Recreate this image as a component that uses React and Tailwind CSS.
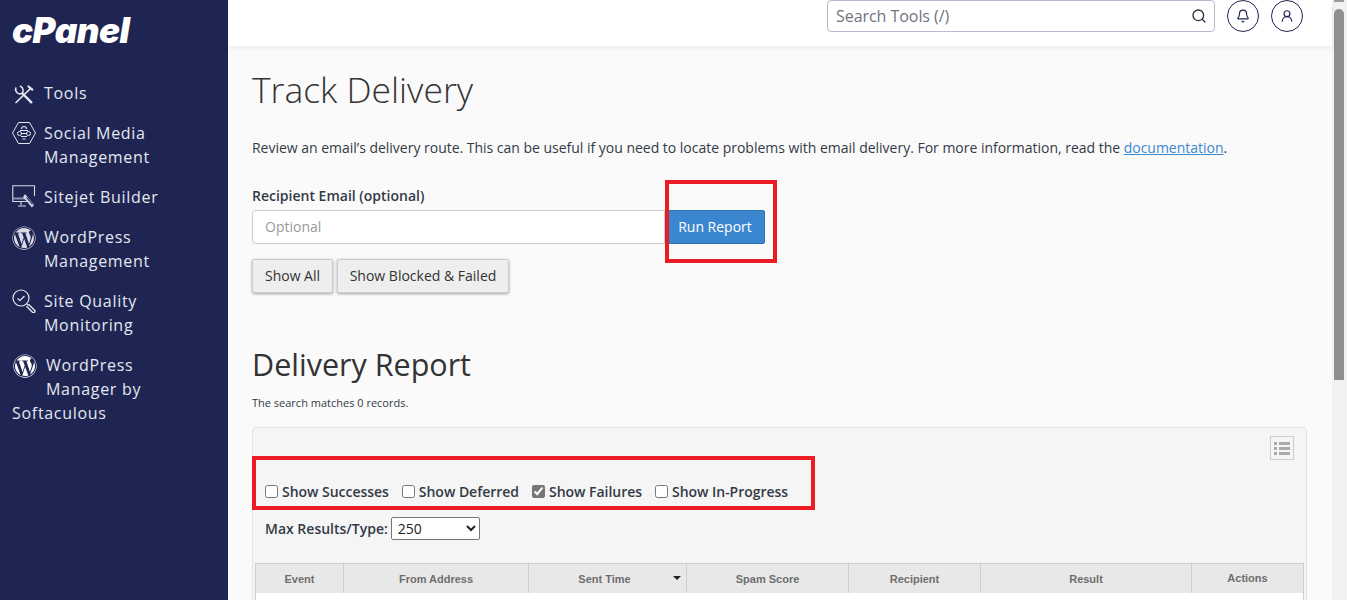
import { Search, Bell, UserRound } from 'lucide-react';
import { FaWordpress } from 'react-icons/fa';

const font = { fontFamily: '"Open Sans", sans-serif' };

const ToolsIcon = () => (
    <svg className="w-6 h-6 shrink-0" viewBox="0 0 24 24" fill="none" stroke="#e4e7f0" strokeWidth="1.700" strokeLinecap="round">
        <path d="M18.500 7.500L4 21.500" />
        <path d="M16.500 5.500l3.800 3.200" strokeWidth="2.200" />
        <path d="M10.500 12.500l8.800 8.800" strokeWidth="2.400" />
        <path d="M3.800 7a4.400 4.400 0 0 0 6.200 5.300 4.400 4.400 0 0 0-1.600-7" strokeWidth="1.500" />
    </svg>
);

const SocialIcon = () => (
    <svg className="w-6 h-6 shrink-0" viewBox="0 0 24 24" fill="none" stroke="#e4e7f0" strokeWidth="1">
        <path d="M6.500 1.500h11L23.500 12l-6 10.500h-11L.5 12z" />
        <circle cx="7.500" cy="12.500" r="2" />
        <circle cx="16.500" cy="12.500" r="2" />
        <path d="M9.500 12.500h5M8 9.500h8M9.500 8a2.500 2.500 0 0 1 5 0M9 15.500h6M10.500 18h3" strokeWidth="1.200" />
    </svg>
);

const SitejetIcon = () => (
    <svg className="w-6 h-6 shrink-0" viewBox="0 0 24 24" fill="none" stroke="#d8dbe6" strokeWidth="1.100">
        <path d="M22.500 11V.8H.8v15.700h14" />
        <path d="M1 13.500h12" stroke="#8f94ad" strokeWidth="2" />
        <path d="M9 17v3M6 21h8" />
        <path d="M13 9l9 11-2 2.500L11 12z" fill="#d8dbe6" stroke="none" />
        <path d="M14.500 12.500l6 7" stroke="#1f2552" />
    </svg>
);

const QualityIcon = () => (
    <svg className="w-6 h-6 shrink-0" viewBox="0 0 24 24" fill="none" stroke="#e4e7f0" strokeWidth="1.200">
        <circle cx="9" cy="9" r="8" />
        <path d="M5.500 9.500l2.500 2 4.500-4.500" />
        <path d="M15 15l1.500 1.500" />
        <path d="M16.500 15.200l6 6a1.300 1.300 0 0 1-2 2l-6-6" strokeWidth="1.400" />
    </svg>
);

const NavItem = ({ icon, lines }) => (
    <div className="flex gap-2 mb-4 px-3 text-base leading-6 tracking-[0.7px] text-[#e4e7f0]">
        {icon}
        <span className="whitespace-pre-line">{lines}</span>
    </div>
);

const Sidebar = () => (
    <aside className="w-[228px] shrink-0 bg-[#1f2552] h-full">
        <div className="h-[81px] pl-3 pt-2">
            <span
                className="block text-[35px] leading-[44px] font-black italic tracking-[-0.5px] text-white"
                style={{ fontFamily: 'Inter, sans-serif' }}
            >
                cPanel
            </span>
        </div>
        <NavItem icon={<ToolsIcon />} lines="Tools" />
        <NavItem icon={<SocialIcon />} lines={'Social Media\nManagement'} />
        <NavItem icon={<SitejetIcon />} lines="Sitejet Builder" />
        <NavItem icon={<FaWordpress className="w-6 h-6 shrink-0 mt-px text-[#d8dbe6]" />} lines={'WordPress\nManagement'} />
        <NavItem icon={<QualityIcon />} lines={'Site Quality\nMonitoring'} />
        <div className="px-3 text-base leading-6 tracking-[0.7px] text-[#e4e7f0]">
            <div className="float-left h-12 ml-px mr-[9px] pt-px">
                <FaWordpress className="w-6 h-6 text-white" />
            </div>
            WordPress<br />
            Manager by<br />
            Softaculous
        </div>
    </aside>
);

const Header = () => (
    <header className="h-[46px] bg-white shadow-[0_2px_5px_rgba(0,0,0,0.06)] flex items-start justify-end gap-3 pr-[29px]">
        <div className="w-[388px] h-8 border border-[#b9bbcf] rounded flex items-center justify-between pl-2 pr-[7px] bg-white">
            <span className="text-base text-[#6f7480] tracking-[-0.05px]">Search Tools (/)</span>
            <Search className="w-4 h-4 text-[#2b2f38]" />
        </div>
        <button className="w-8 h-8 rounded-full border border-[#1f2552] flex items-center justify-center">
            <Bell className="w-[14px] h-[14px] text-[#1f2552]" />
        </button>
        <button className="w-8 h-8 rounded-full border border-[#1f2552] flex items-center justify-center">
            <UserRound className="w-[14px] h-[14px] text-[#1f2552]" />
        </button>
    </header>
);

const columns = [
    { name: 'Event' },
    { name: 'From Address' },
    { name: 'Sent Time', sorted: true },
    { name: 'Spam Score' },
    { name: 'Recipient' },
    { name: 'Result' },
    { name: 'Actions' },
];

const ReportTable = () => (
    <div className="mx-[2px] border-x border-[#cfcfcf] bg-white pb-[20px]">
        <div
            className="grid grid-cols-[88px_185px_158px_162px_132px_211px_1fr] h-[30px] bg-[#e8e8e8] border-t border-[#cfcfcf] text-[11px] font-bold text-[#6e6e6e]"
            style={{ fontFamily: '"Liberation Sans", Arial, sans-serif' }}
        >
            {columns.map((col, i) => (
                <div
                    key={col.name}
                    className={`relative flex justify-center ${i < 6 ? 'border-r border-[#cfcfcf] pt-[7px]' : 'pt-[6px]'} ${col.sorted ? 'pr-[6px]' : ''}`}
                >
                    {col.name}
                    {col.sorted && (
                        <span className="absolute right-[5px] top-[12px] w-0 h-0 border-x-[4px] border-x-transparent border-t-[4px] border-t-[#222]"></span>
                    )}
                </div>
            ))}
        </div>
    </div>
);

const Filter = ({ label, checked }) => (
    <label className="flex items-center gap-[4px]">
        <input type="checkbox" defaultChecked={checked} className="w-[13px] h-[13px] m-0 mb-px accent-[#767676]" />
        <span className="tracking-[-0.03px]">{label}</span>
    </label>
);

const App = () => (
    <div className="flex h-[600px] overflow-hidden bg-white" style={font}>
        <Sidebar />
        <main className="relative w-[1104px] h-full bg-[#fafafa] text-[#333a45]">
            <Header />
            <div className="pl-6 pr-[25px]">
                <h1 className="mt-[23px] text-[35.500px] leading-10 font-light text-[#333]">Track Delivery</h1>
                <p className="mt-[29px] text-sm leading-5 tracking-[-0.016px]">
                    Review an email’s delivery route. This can be useful if you need to locate problems with email delivery. For more information, read the{' '}
                    <a className="text-[#3b88d0] underline">documentation</a>.
                </p>
                <label className="block mt-7 text-sm leading-5 font-semibold">Recipient Email (optional)</label>
                <div className="flex mt-1 h-[34px] w-[513px]">
                    <input
                        className="flex-1 min-w-0 bg-white border border-[#ccc] rounded-l px-3 text-sm placeholder:text-[#999]"
                        placeholder="Optional"
                    />
                    <button className="w-[100px] bg-[#3a87cf] border border-[#2f73b3] rounded-r-[2px] text-sm text-white">Run Report</button>
                </div>
                <div className="flex gap-1 mt-[15px] text-sm text-[#333]">
                    <button className="h-[34px] w-[81px] bg-[#eee] border border-[#ccc] rounded-[2px] shadow-[0_1px_3px_rgba(0,0,0,0.35)]">Show All</button>
                    <button className="h-[34px] w-[172px] bg-[#eee] border border-[#ccc] rounded-[2px] shadow-[0_1px_3px_rgba(0,0,0,0.35)]">Show Blocked &amp; Failed</button>
                </div>
                <h2 className="mt-[51px] text-[30.500px] leading-10 font-medium text-[#333]">Delivery Report</h2>
                <p className="mt-[11px] text-[11px] leading-4">The search matches 0 records.</p>
                <section className="mt-[16px] h-[240px] bg-[#f5f5f5] border border-[#e3e3e3] rounded-t">
                    <div className="flex justify-end pt-2 pr-3">
                        <div className="w-6 h-6 border border-[#ccc] flex flex-col justify-center gap-[2px] px-[3px]">
                            {[0, 1, 2].map((n) => (
                                <div key={n} className="flex gap-[2px] items-center">
                                    <span className="w-[3px] h-[3px] bg-[#aaa]"></span>
                                    <span className="flex-1 h-[3px] bg-[#aaa]"></span>
                                </div>
                            ))}
                        </div>
                    </div>
                    <div className="flex gap-[13px] mt-[22px] px-3 text-sm leading-5 font-semibold">
                        <Filter label="Show Successes" />
                        <Filter label="Show Deferred" />
                        <Filter label="Show Failures" checked />
                        <Filter label="Show In-Progress" />
                    </div>
                    <div className="flex items-center gap-[3px] mt-[15px] px-3 text-sm font-semibold">
                        <span>Max Results/Type:</span>
                        <select className="w-[89px] h-[23px] bg-white border border-[#767676] rounded-[2px] font-normal text-sm text-[#222] pl-[2px]">
                            <option>250</option>
                        </select>
                    </div>
                    <div className="mt-[23px]">
                        <ReportTable />
                    </div>
                </section>
            </div>
            {/* red annotation boxes lying over the page */}
            <div className="absolute left-[437px] top-[180px] w-[112px] h-[83px] border-4 border-[#ed1c24]"></div>
            <div className="absolute left-[24px] top-[456px] w-[563px] h-[54px] border-4 border-[#ed1c24]"></div>
        </main>
        <div className="w-[15px] h-full bg-[#f1f1f1] shrink-0 pl-[2px]">
            <div className="w-[10px] h-[2px] bg-[#9a9a9a]"></div>
            <div className="w-[10px] h-[371px] mt-[7px] bg-[#8f8f8f] rounded-t-full"></div>
        </div>
    </div>
);

export default App;
